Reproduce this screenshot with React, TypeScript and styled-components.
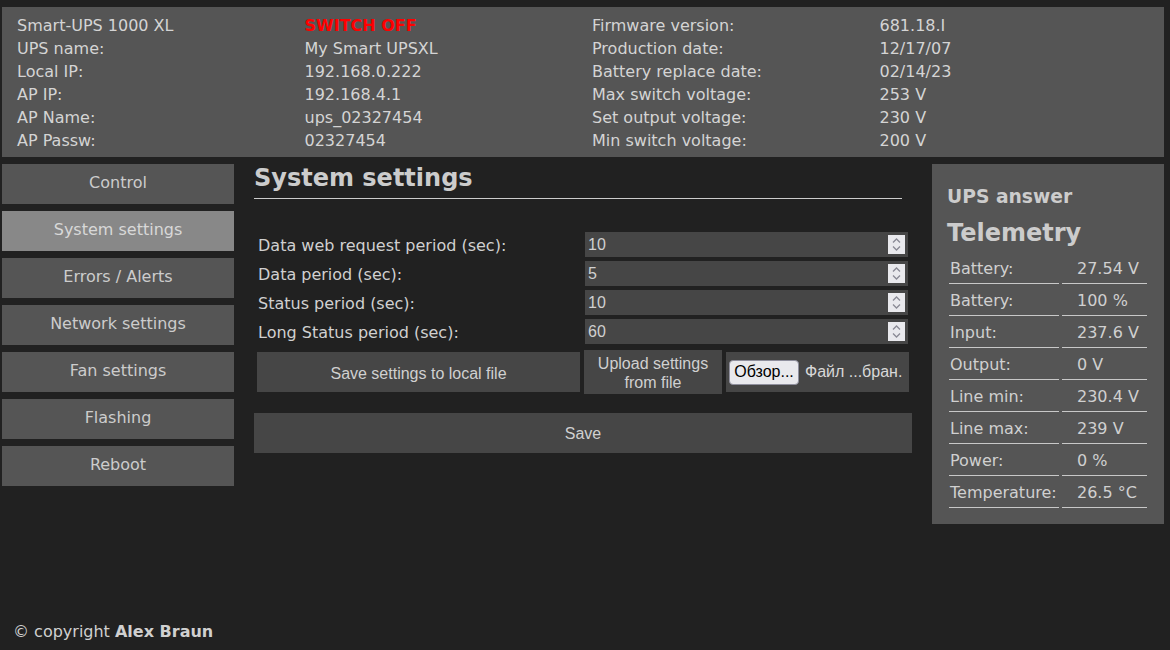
import React from "react";
import styled, { createGlobalStyle } from "styled-components";

const Global = createGlobalStyle`
  html, body { margin: 0; padding: 0; background: #212121; }
  body { font-family: "DejaVu Sans", "Liberation Sans", sans-serif; color: #d0d0d0; font-size: 16px; }
  * { box-sizing: border-box; }
`;

const controlFont = `"Liberation Sans", Arial, sans-serif`;

const Page = styled.div`
  min-height: 650px;
  display: flex;
  flex-direction: column;
  padding: 7px 6px 0 2px;
`;

const Header = styled.section`
  background: #555555;
  padding: 7px 0 5px 15px;
  display: grid;
  grid-template-columns: repeat(4, 287.5px);
  grid-auto-rows: 23px;
  align-items: center;
`;

const Cell = styled.div<{ $alert?: boolean }>`
  color: ${(p) => (p.$alert ? "#ff0000" : "#d4d4d4")};
  font-weight: ${(p) => (p.$alert ? 700 : 400)};
  white-space: nowrap;
`;

const Body = styled.div`
  display: flex;
  gap: 20px;
  margin-top: 7px;
  align-items: flex-start;
`;

const Nav = styled.nav`
  width: 232px;
  display: flex;
  flex-direction: column;
  gap: 7px;
`;

const NavButton = styled.div<{ $active?: boolean }>`
  height: 40px;
  padding-bottom: 4px;
  display: flex;
  align-items: center;
  justify-content: center;
  background: ${(p) => (p.$active ? "#888888" : "#555555")};
  color: ${(p) => (p.$active ? "#d8d8d8" : "#cccccc")};
`;

const Main = styled.main`
  width: 658px;
  display: flex;
  flex-direction: column;
`;

const Title = styled.h2`
  margin: 0 10px 0 0;
  font-size: 24px;
  font-weight: 700;
  color: #cccccc;
  line-height: 28px;
  padding-top: 0;
  padding-bottom: 6px;
  border-bottom: 1px solid #cccccc;
`;

const Form = styled.div`
  margin-top: 33px;
  padding: 0 4px;
  display: grid;
  grid-template-columns: 327px 323px;
  grid-auto-rows: 25px;
  row-gap: 4px;
  align-items: center;
`;

const Label = styled.label`
  color: #d0d0d0;
  padding-top: 1px;
`;

const NumberBox = styled.div`
  position: relative;
  height: 25px;
  background: #464646;
  display: flex;
  align-items: center;
  padding-left: 3px;
  color: #d0d0d0;
  font-family: ${controlFont};
`;

const Spinner = styled.span`
  position: absolute;
  right: 3px;
  top: 3px;
  width: 17px;
  height: 19px;
  background: #e9e9ed;
  display: flex;
  align-items: center;
  justify-content: center;
`;

const ButtonsRow = styled.div`
  margin-top: 6px;
  padding-left: 3px;
  display: flex;
  gap: 4px;
  align-items: center;
`;

const GreyButton = styled.div<{ $w: number; $h: number }>`
  width: ${(p) => p.$w}px;
  height: ${(p) => p.$h}px;
  background: #464646;
  color: #d0d0d0;
  font-family: ${controlFont};
  display: flex;
  align-items: center;
  justify-content: center;
  text-align: center;
  line-height: 19px;
  padding-top: 2px;
`;

const FileBox = styled.div`
  width: 183px;
  height: 40px;
  background: #464646;
  display: flex;
  align-items: center;
  padding-left: 3px;
  gap: 6px;
  color: #d8d8d8;
  font-family: ${controlFont};
  white-space: nowrap;
`;

const BrowseButton = styled.span`
  background: #e9e9ed;
  border: 1px solid #8f8f9d;
  border-radius: 4px;
  color: #000;
  height: 25px;
  width: 70px;
  display: flex;
  align-items: center;
  justify-content: center;
`;

const SaveButton = styled.div`
  margin-top: 19px;
  height: 40px;
  padding-top: 2px;
  background: #464646;
  color: #d0d0d0;
  font-family: ${controlFont};
  display: flex;
  align-items: center;
  justify-content: center;
`;

const Side = styled.aside`
  width: 232px;
  background: #555555;
  padding: 19px 15px 16px 15px;
`;

const SideTitle = styled.h3`
  margin: 0;
  font-size: 18.72px;
  font-weight: 700;
  color: #cccccc;
  line-height: 28px;
`;

const SideBig = styled.h2`
  margin: 5px 0 0 0;
  font-size: 24px;
  font-weight: 700;
  color: #cccccc;
  line-height: 34px;
`;

const Telemetry = styled.div`
  margin-top: 2px;
  padding-left: 2px;
  display: grid;
  grid-template-columns: 110px 85px;
  column-gap: 3px;
  grid-auto-rows: 32px;
`;

const TCell = styled.div<{ $value?: boolean }>`
  border-bottom: 1px solid #c8c8c8;
  display: flex;
  align-items: center;
  padding-left: ${(p) => (p.$value ? "15px" : "1px")};
  color: #d0d0d0;
  white-space: nowrap;
  padding-top: 1px;
`;

const Footer = styled.footer`
  margin-top: auto;
  padding: 0 0 8px 11px;
  color: #d0d0d0;
  line-height: 20px;
  b { font-weight: 700; }
`;

const header: [string, string, string, string, boolean?][] = [
  ["Smart-UPS 1000 XL", "SWITCH OFF", "Firmware version:", "681.18.I", true],
  ["UPS name:", "My Smart UPSXL", "Production date:", "12/17/07"],
  ["Local IP:", "192.168.0.222", "Battery replace date:", "02/14/23"],
  ["AP IP:", "192.168.4.1", "Max switch voltage:", "253 V"],
  ["AP Name:", "ups_02327454", "Set output voltage:", "230 V"],
  ["AP Passw:", "02327454", "Min switch voltage:", "200 V"],
];

const nav = ["Control", "System settings", "Errors / Alerts", "Network settings", "Fan settings", "Flashing", "Reboot"];

const fields = [
  ["Data web request period (sec):", "10"],
  ["Data period (sec):", "5"],
  ["Status period (sec):", "10"],
  ["Long Status period (sec):", "60"],
];

const telemetry = [
  ["Battery:", "27.54 V"],
  ["Battery:", "100 %"],
  ["Input:", "237.6 V"],
  ["Output:", "0 V"],
  ["Line min:", "230.4 V"],
  ["Line max:", "239 V"],
  ["Power:", "0 %"],
  ["Temperature:", "26.5 °C"],
];

const SpinIcon = () => (
  <svg width="11" height="15" viewBox="0 0 11 15" fill="none" stroke="#8a8a95" strokeWidth="1.3">
    <path d="M2 5.5 L5.5 2 L9 5.5" />
    <path d="M2 9.5 L5.5 13 L9 9.5" />
  </svg>
);

export default function App() {
  return (
    <>
      <Global />
      <Page>
        <Header>
          {header.map(([a, b, c, d, alert], i) => (
            <React.Fragment key={i}>
              <Cell>{a}</Cell>
              <Cell $alert={alert}>{b}</Cell>
              <Cell>{c}</Cell>
              <Cell>{d}</Cell>
            </React.Fragment>
          ))}
        </Header>
        <Body>
          <Nav>
            {nav.map((n) => (
              <NavButton key={n} $active={n === "System settings"}>{n}</NavButton>
            ))}
          </Nav>
          <Main>
            <Title>System settings</Title>
            <Form>
              {fields.map(([l, v]) => (
                <React.Fragment key={l}>
                  <Label>{l}</Label>
                  <NumberBox>
                    {v}
                    <Spinner><SpinIcon /></Spinner>
                  </NumberBox>
                </React.Fragment>
              ))}
            </Form>
            <ButtonsRow>
              <GreyButton $w={323} $h={40}>Save settings to local file</GreyButton>
              <GreyButton $w={138} $h={44}>Upload settings<br />from file</GreyButton>
              <FileBox>
                <BrowseButton>Обзор...</BrowseButton>
                Файл ...бран.
              </FileBox>
            </ButtonsRow>
            <SaveButton>Save</SaveButton>
          </Main>
          <Side>
            <SideTitle>UPS answer</SideTitle>
            <SideBig>Telemetry</SideBig>
            <Telemetry>
              {telemetry.map(([l, v], i) => (
                <React.Fragment key={i}>
                  <TCell>{l}</TCell>
                  <TCell $value>{v}</TCell>
                </React.Fragment>
              ))}
            </Telemetry>
          </Side>
        </Body>
        <Footer>© copyright <b>Alex Braun</b></Footer>
      </Page>
    </>
  );
}
